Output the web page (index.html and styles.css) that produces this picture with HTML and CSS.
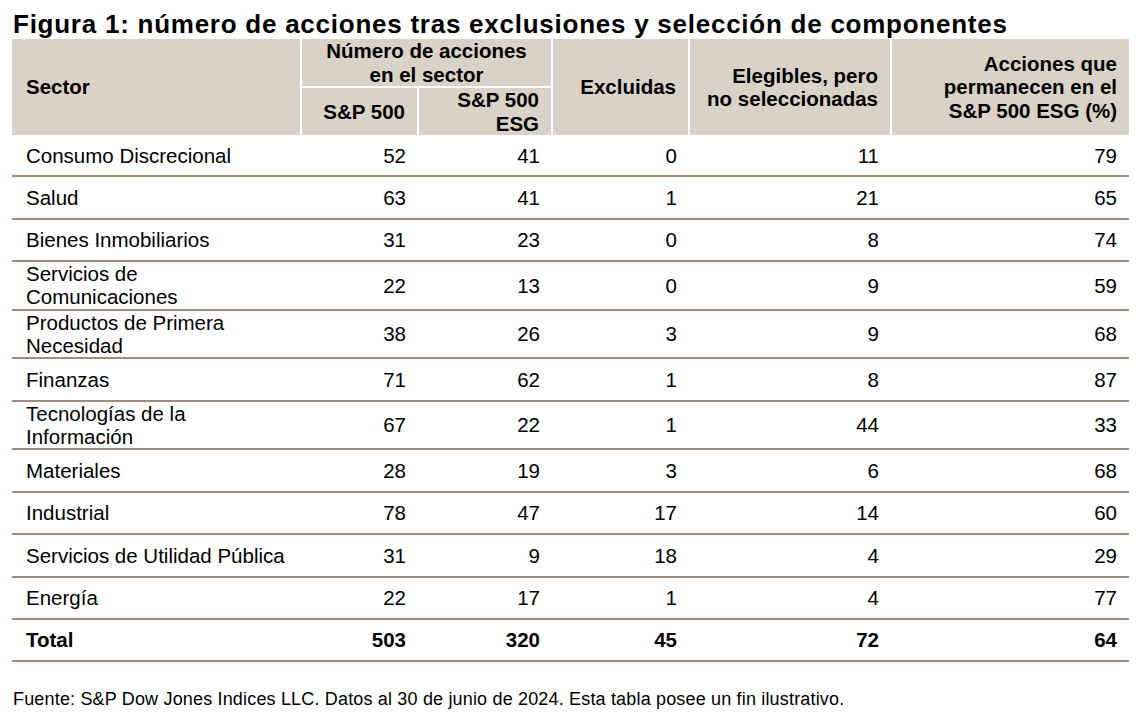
FILE: index.html
```html
<!DOCTYPE html>
<html lang="es">
<head>
<meta charset="utf-8">
<title>Figura 1</title>
<link rel="stylesheet" href="styles.css">
</head>
<body>
<div class="page">
  <h1 class="title">Figura 1: número de acciones tras exclusiones y selección de componentes</h1>
  <table class="data">
    <colgroup>
      <col class="c-sector">
      <col class="c-sp">
      <col class="c-esg">
      <col class="c-exc">
      <col class="c-ele">
      <col class="c-acc">
    </colgroup>
    <thead>
      <tr class="hr1">
        <th rowspan="2" class="left">Sector</th>
        <th colspan="2" class="center group">Número de acciones<br>en el sector</th>
        <th rowspan="2">Excluidas</th>
        <th rowspan="2">Elegibles, pero<br>no seleccionadas</th>
        <th rowspan="2">Acciones que<br>permanecen en el<br>S&amp;P 500 ESG (%)</th>
      </tr>
      <tr class="hr2">
        <th>S&amp;P 500</th>
        <th>S&amp;P 500<br>ESG</th>
      </tr>
    </thead>
    <tbody>
      <tr><td>Consumo Discrecional</td><td>52</td><td>41</td><td>0</td><td>11</td><td>79</td></tr>
      <tr><td>Salud</td><td>63</td><td>41</td><td>1</td><td>21</td><td>65</td></tr>
      <tr><td>Bienes Inmobiliarios</td><td>31</td><td>23</td><td>0</td><td>8</td><td>74</td></tr>
      <tr><td>Servicios de<br>Comunicaciones</td><td>22</td><td>13</td><td>0</td><td>9</td><td>59</td></tr>
      <tr><td>Productos de Primera<br>Necesidad</td><td>38</td><td>26</td><td>3</td><td>9</td><td>68</td></tr>
      <tr><td>Finanzas</td><td>71</td><td>62</td><td>1</td><td>8</td><td>87</td></tr>
      <tr><td>Tecnologías de la<br>Información</td><td>67</td><td>22</td><td>1</td><td>44</td><td>33</td></tr>
      <tr><td>Materiales</td><td>28</td><td>19</td><td>3</td><td>6</td><td>68</td></tr>
      <tr><td>Industrial</td><td>78</td><td>47</td><td>17</td><td>14</td><td>60</td></tr>
      <tr><td>Servicios de Utilidad Pública</td><td>31</td><td>9</td><td>18</td><td>4</td><td>29</td></tr>
      <tr><td>Energía</td><td>22</td><td>17</td><td>1</td><td>4</td><td>77</td></tr>
      <tr class="total"><td>Total</td><td>503</td><td>320</td><td>45</td><td>72</td><td>64</td></tr>
    </tbody>
  </table>
  <p class="source">Fuente: S&amp;P Dow Jones Indices LLC. Datos al 30 de junio de 2024. Esta tabla posee un fin ilustrativo.</p>
</div>
</body>
</html>
```

FILE: styles.css
```css
html, body {
  margin: 0;
  padding: 0;
  background: #ffffff;
}

body {
  font-family: "Liberation Sans", Arial, sans-serif;
  color: #000000;
}

.page {
  padding: 10px 12px 0 12px;
}

.title {
  margin: 0 0 1px 1px;
  font-size: 26px;
  line-height: 28px;
  font-weight: 700;
  letter-spacing: 0.75px;
  white-space: nowrap;
}

.data {
  width: 1117px;
  table-layout: fixed;
  border-collapse: collapse;
  font-size: 20.5px;
}

.c-sector { width: 289px; }
.c-sp { width: 117px; }
.c-esg { width: 134px; }
.c-exc { width: 137px; }
.c-ele { width: 202px; }
.c-acc { width: 238px; }

.data th {
  background: #d9d2c7;
  font-weight: 700;
  text-align: right;
  vertical-align: middle;
  line-height: 23.5px;
  padding: 0 12px;
  border-left: 2px solid #ffffff;
}

.data th.left {
  text-align: left;
  padding-left: 14px;
  border-left: none;
}

.data th.center {
  text-align: center;
}

.data .hr1 th {
  height: 47px;
}

.data .hr1 th.group {
  border-bottom: 2px solid #ffffff;
}

.data .hr2 th {
  height: 47px;
}

.data td {
  height: 40.4px;
  padding: 0 12px;
  line-height: 23.3px;
  text-align: right;
  vertical-align: middle;
  border-bottom: 2px solid #9e8d78;
}

.data td:first-child {
  text-align: left;
  padding-left: 14px;
}

.data .total td {
  font-weight: 700;
}

.source {
  margin: 27px 0 0 1px;
  font-size: 18px;
  line-height: 20px;
  letter-spacing: 0.17px;
}
```
